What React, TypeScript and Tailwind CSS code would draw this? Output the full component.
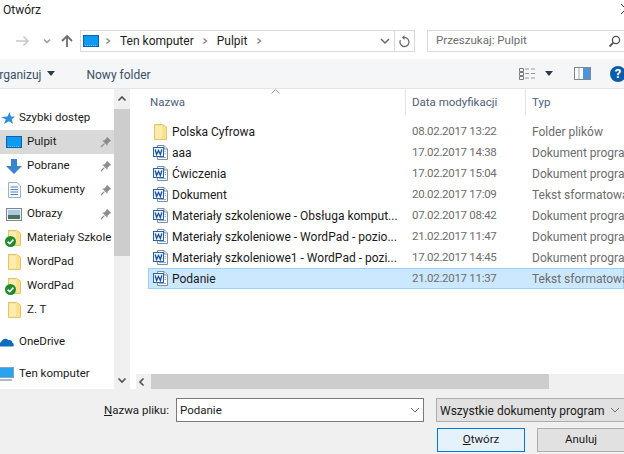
import React from "react";

const font = { fontFamily: 'Roboto, "Noto Sans", sans-serif' };

function WordIcon() {
  return (
    <svg width="16" height="16" viewBox="0 0 16 16" className="shrink-0">
      <path d="M4.5 0.5H11L14.5 4V14.5H4.5Z" fill="#fff" stroke="#7f8fa6" />
      <path d="M11 .5V4H14.5" fill="#e8eef5" stroke="#7f8fa6" />
      <rect x="0.5" y="2.5" width="10" height="9" fill="#e9f1fb" stroke="#2b62a8" />
      <path d="M2.2 4.5L3.6 9.5L5.5 5.5L7.4 9.5L8.8 4.5" fill="none" stroke="#1f4f96" strokeWidth="1.3" />
      <path d="M11.5 6.5H13M11.5 8.5H13M6 12.5H13" stroke="#8fb0d6" />
    </svg>
  );
}

function FolderIcon() {
  return (
    <svg width="13" height="16" viewBox="0 0 13 16" className="shrink-0">
      <path d="M0.5 0.5H8.5L12.5 3V15.5H0.5Z" fill="#fde28e" stroke="#e3c46f" />
      <path d="M1.5 2H8V14.5H1.5Z" fill="#ffedb0" />
    </svg>
  );
}

function Check() {
  return (
    <svg width="11" height="11" viewBox="0 0 11 11" className="absolute bottom-[-1px] left-[-3px]">
      <circle cx="5.5" cy="5.5" r="5.5" fill="#1f8a2e" />
      <path d="M2.6 5.6L4.7 7.7L8.4 3.6" fill="none" stroke="#fff" strokeWidth="1.6" />
    </svg>
  );
}

function Pin() {
  return (
    <svg width="12" height="12" viewBox="0 0 12 12">
      <path d="M7 0.8L11.2 5L9.8 5.6L7.6 7.8L7.4 9.8L2.2 4.6L4.2 4.4L6.4 2.2Z" fill="#8c8c8c" />
      <path d="M4.4 7.6L1 11" stroke="#8c8c8c" strokeWidth="1.2" />
    </svg>
  );
}

function Monitor() {
  return (
    <svg width="16" height="12" viewBox="0 0 16 12" className="shrink-0">
      <rect x="0.5" y="0.5" width="15" height="11" fill="#0f9af2" stroke="#0a63ad" />
      <path d="M2 10.5H14" stroke="#6fc6ff" strokeDasharray="1 1" />
    </svg>
  );
}

function Chevron({ className, d, color = "#606060", w = 1.5 }: { className?: string; d: string; color?: string; w?: number }) {
  return (
    <svg width="10" height="10" viewBox="0 0 10 10" className={`shrink-0 ${className ?? ""}`}>
      <path d={d} fill="none" stroke={color} strokeWidth={w} />
    </svg>
  );
}

function NavRow({
  icon,
  label,
  pin,
  active,
  spaced,
  top,
}: {
  icon: React.ReactNode;
  label: string;
  pin?: boolean;
  active?: boolean;
  spaced?: boolean;
  top?: boolean;
}) {
  return (
    <div
      className={`flex h-[24px] shrink-0 items-center overflow-hidden whitespace-nowrap ${active ? "bg-[#d9d9d9]" : ""} ${spaced ? "mt-[8px]" : ""}`}
    >
      <div className={`flex shrink-0 items-center ${top ? "w-[19px]" : "w-[27px] pl-[5px]"}`}>{icon}</div>
      <span className="flex-1 text-[#1a1a1a]">{label}</span>
      {pin && (
        <span className="mr-[2px] flex">
          <Pin />
        </span>
      )}
    </div>
  );
}

function CheckedFolder() {
  return (
    <span className="relative flex">
      <FolderIcon />
      <Check />
    </span>
  );
}

const files: [string, string, string, "folder" | "word"][] = [
  ["Polska Cyfrowa", "08.02.2017 13:22", "Folder plików", "folder"],
  ["aaa", "17.02.2017 14:38", "Dokument progra", "word"],
  ["Ćwiczenia", "17.02.2017 15:04", "Dokument progra", "word"],
  ["Dokument", "20.02.2017 17:09", "Tekst sformatowa", "word"],
  ["Materiały szkoleniowe - Obsługa komput...", "07.02.2017 08:42", "Dokument progra", "word"],
  ["Materiały szkoleniowe - WordPad - pozio...", "21.02.2017 11:47", "Dokument progra", "word"],
  ["Materiały szkoleniowe1 - WordPad - pozi...", "17.02.2017 14:45", "Dokument progra", "word"],
  ["Podanie", "21.02.2017 11:37", "Tekst sformatowa", "word"],
];

const crumb = "M3.5 2.5L6.5 5L3.5 7.5";

export default function App() {
  return (
    <div className="flex h-[454px] w-[624px] flex-col overflow-hidden bg-white text-[11.5px] leading-none" style={font}>
      {/* Title bar */}
      <div className="flex h-[30px] shrink-0 items-start justify-between pl-[3px] pt-[3px] text-[#222]">
        <span className="text-[12px] leading-[14px]">Otwórz</span>
        <svg width="12" height="12" viewBox="0 0 12 12" className="mr-[-8px] shrink-0">
          <path d="M1 1L11 11M11 1L1 11" fill="none" stroke="#333" />
        </svg>
      </div>

      {/* Address row */}
      <div className="flex h-[22px] shrink-0 items-center">
        <svg width="14" height="12" viewBox="0 0 14 12" className="ml-[16px] shrink-0">
          <path d="M0 6H12M7.5 1.5L12 6L7.5 10.5" fill="none" stroke="#c9c9c9" strokeWidth="1.6" />
        </svg>
        <Chevron className="ml-[12px]" d="M2 3.5L5 6.5L8 3.5" color="#9a9a9a" />
        <svg width="14" height="14" viewBox="0 0 14 14" className="ml-[8px] shrink-0">
          <path d="M7 13V2M2 7L7 2L12 7" fill="none" stroke="#6d6d6d" strokeWidth="1.8" />
        </svg>
        <div className="ml-[6px] flex h-[22px] w-[315px] shrink-0 items-center border border-[#d9d9d9] pl-[2px] text-[12px] text-[#222]">
          <Monitor />
          <Chevron className="ml-[4px]" d={crumb} color="#8c8c8c" />
          <span className="ml-[7px]">Ten komputer</span>
          <Chevron className="ml-[6px]" d={crumb} color="#8c8c8c" />
          <span className="ml-[7px]">Pulpit</span>
          <Chevron className="ml-[7px]" d={crumb} color="#8c8c8c" />
          <Chevron className="ml-auto mr-[4px]" d="M1 3L5 7L9 3" color="#6a6a6a" />
        </div>
        <div className="flex h-[22px] w-[20px] shrink-0 items-center justify-center border border-l-0 border-[#d9d9d9]">
          <svg width="13" height="13" viewBox="0 0 13 13">
            <path d="M6.5 2.5A4.5 4.5 0 1 1 2.4 5" fill="none" stroke="#6a6a6a" strokeWidth="1.3" />
            <path d="M6.5 0L3.8 2.6L6.5 5Z" fill="#6a6a6a" />
          </svg>
        </div>
        <div className="ml-[12px] flex h-[22px] flex-1 items-center justify-between border border-r-0 border-[#d9d9d9] pl-[8px] pr-[3px] text-[#6d6d6d]">
          <span>Przeszukaj: Pulpit</span>
          <svg width="13" height="13" viewBox="0 0 13 13">
            <circle cx="8" cy="5" r="3.6" fill="none" stroke="#555" strokeWidth="1.3" />
            <path d="M5.3 7.7L1.5 11.5" stroke="#555" strokeWidth="1.8" />
          </svg>
        </div>
      </div>

      {/* Command bar */}
      <div className="mt-[7px] flex h-[30px] shrink-0 items-center border-b border-[#e5e5e5] bg-[#f5f6f7] text-[12px] text-[#3b5066]">
        <span className="ml-[-9px] pt-[2px]">Organizuj</span>
        <span className="ml-[6px] h-0 w-0 border-x-[4px] border-t-[5px] border-x-transparent border-t-[#2b3b4b]" />
        <span className="ml-[31px] pt-[2px]">Nowy folder</span>
        <svg width="17" height="13" viewBox="0 0 17 13" className="ml-auto shrink-0">
          <path d="M.5 1.5h4v3h-4zM.5 5.5h4v3h-4zM.5 9.5h4v3h-4z" fill="none" stroke="#7a7a7a" />
          <path d="M6 2h4M12 2h4M6 6.5h4M12 6.5h4M6 11h4M12 11h4" stroke="#9a9a9a" />
        </svg>
        <span className="ml-[9px] h-0 w-0 border-x-[4px] border-t-[5px] border-x-transparent border-t-[#2b3b4b]" />
        <svg width="17" height="13" viewBox="0 0 17 13" className="ml-[21px] shrink-0">
          <rect x="0.5" y="0.5" width="16" height="12" fill="#fff" stroke="#7c8894" />
          <rect x="9" y="1" width="7" height="11" fill="#4d93d9" />
          <path d="M5 1V12" stroke="#9aa5b0" />
        </svg>
        <span className="ml-[19px] mr-[-2px] flex h-[16px] w-[16px] shrink-0 items-center justify-center rounded-full bg-[#0b5cab] text-[13px] font-bold text-white">
          ?
        </span>
      </div>

      {/* Navigation pane and file list */}
      <div className="flex h-[300px] shrink-0">
        <div className="flex w-[114px] shrink-0 flex-col overflow-hidden pt-[17px]">
          <NavRow
            top
            label="Szybki dostęp"
            icon={
              <svg width="14" height="13" viewBox="0 0 14 13" className="ml-[1px]">
                <path d="M8.5 0L10 4.5H14L10.8 7.2L12 12L8 9.2L3 12L4.8 7.4L0 5L6.5 4.5Z" fill="#2f8fd8" />
              </svg>
            }
          />
          <NavRow active pin label="Pulpit" icon={<span className="ml-[1px] flex"><Monitor /></span>} />
          <NavRow
            pin
            label="Pobrane"
            icon={
              <svg width="16" height="15" viewBox="0 0 16 15" className="ml-[1px]">
                <path d="M5 0H11V7H16L8 15L0 7H5Z" fill="#3a84cf" />
              </svg>
            }
          />
          <NavRow
            pin
            label="Dokumenty"
            icon={
              <svg width="13" height="16" viewBox="0 0 13 16" className="ml-[3px]">
                <path d="M.5.5H9L12.5 4V15.5H.5Z" fill="#f7fafd" stroke="#9fb0c0" />
                <path d="M2.5 5H10M2.5 7.5H10M2.5 10H10M2.5 12.5H10" stroke="#4d86bd" />
              </svg>
            }
          />
          <NavRow
            pin
            label="Obrazy"
            icon={
              <svg width="16" height="13" viewBox="0 0 16 13" className="ml-[1px]">
                <rect x="0.5" y="0.5" width="15" height="12" fill="#eef2f5" stroke="#7b8894" />
                <rect x="2" y="2" width="12" height="5" fill="#a9c9e4" />
                <rect x="2" y="7" width="12" height="4" fill="#49715c" />
              </svg>
            }
          />
          <NavRow label="Materiały Szkole" icon={<span className="ml-[3px] flex"><CheckedFolder /></span>} />
          <NavRow label="WordPad" icon={<span className="ml-[3px] flex"><FolderIcon /></span>} />
          <NavRow label="WordPad" icon={<span className="ml-[3px] flex"><CheckedFolder /></span>} />
          <NavRow label="Z. T" icon={<span className="ml-[3px] flex"><FolderIcon /></span>} />
          <NavRow
            top
            spaced
            label="OneDrive"
            icon={
              <svg width="15" height="10" viewBox="0 0 15 10" className="ml-[-1px]">
                <path d="M1 9.5C-.5 8 0 5.5 2 5.2C3 1.5 7.5 .5 9.5 3.2C12 2.6 13.5 4.5 13.3 5.8C15 6.2 15.3 8.8 14 9.5Z" fill="#0f6cbd" />
              </svg>
            }
          />
          <NavRow
            top
            spaced
            label="Ten komputer"
            icon={
              <svg width="16" height="14" viewBox="0 0 16 14" className="ml-[-2px]">
                <rect x="0.5" y="0.5" width="15" height="10" fill="#28a4ee" stroke="#7fa6c0" />
                <path d="M2 13H14" stroke="#8ba4b8" strokeWidth="1.5" />
              </svg>
            }
          />
        </div>

        {/* Navigation scrollbar */}
        <div className="flex w-[16px] shrink-0 flex-col items-center bg-[#f0f0f0]">
          <Chevron className="mt-[5px]" d="M1.5 6.5L5 3L8.5 6.5" color="#555" w={1.7} />
          <div className="mt-[5px] h-[147px] w-full bg-[#cdcdcd]" />
          <Chevron className="mb-[4px] mt-auto" d="M1.5 3.5L5 7L8.5 3.5" color="#555" w={1.7} />
        </div>

        {/* File list */}
        <div className="relative flex min-w-0 flex-1 flex-col overflow-hidden">
          <svg width="9" height="5" viewBox="0 0 9 5" className="absolute left-[141px] top-0">
            <path d="M.5 4.5L4.5 .5L8.5 4.5" fill="none" stroke="#9a9a9a" />
          </svg>
          <div className="ml-[20px] flex h-[26px] shrink-0 items-center text-[#4c607a]">
            <span className="w-[255px] pt-[2px]">Nazwa</span>
            <span className="flex h-full w-[120px] items-center border-l border-[#e5e5e5] pl-[6px] pt-[2px]">Data modyfikacji</span>
            <span className="flex h-full items-center border-l border-[#e5e5e5] pl-[6px] pt-[2px]">Typ</span>
          </div>
          <div className="ml-[18px] mt-[6px] flex flex-1 flex-col">
            {files.map(([name, date, type, kind]) => {
              const selected = name === "Podanie";
              return (
                <div
                  key={name}
                  className={`flex h-[21px] shrink-0 items-center whitespace-nowrap border text-[12px] ${selected ? "border-[#99d1ff] bg-[#cce8ff]" : "border-transparent"}`}
                >
                  <span className="ml-[4px] flex w-[15px] shrink-0 justify-center">{kind === "folder" ? <FolderIcon /> : <WordIcon />}</span>
                  <span className="ml-[4px] w-[240px] shrink-0 text-[#1a1a1a]">{name}</span>
                  <span className="w-[120px] shrink-0 text-[11.5px] tracking-[-0.3px] text-[#6d6d6d]">{date}</span>
                  <span className="text-[#6d6d6d]">{type}</span>
                </div>
              );
            })}
          </div>
          {/* Horizontal scrollbar */}
          <div className="ml-[6px] flex h-[15px] shrink-0 items-center bg-[#f0f0f0]">
            <Chevron className="ml-[1px]" d="M6.5 1.5L3 5L6.5 8.5" color="#555" w={1.7} />
            <div className="ml-[4px] h-full w-[398px] bg-[#cdcdcd]" />
          </div>
        </div>
      </div>

      {/* Dialog footer */}
      <div className="flex min-h-0 flex-1 flex-col bg-[#f0f0f0] pt-[9px] text-[#1a1a1a]">
        <div className="flex h-[24px] shrink-0 items-center">
          <span className="ml-[104px] w-[72px] pt-[2px]">
            <span className="underline">N</span>azwa pliku:
          </span>
          <div className="flex h-full w-[248px] shrink-0 items-center justify-between border border-[#7a7a7a] bg-white pl-[3px] pr-[3px]">
            <span className="pt-[2px]">Podanie</span>
            <Chevron d="M1 3L5 7L9 3" color="#707070" w={1} />
          </div>
          <div className="ml-[12px] flex h-full flex-1 items-center justify-between overflow-hidden whitespace-nowrap border border-r-0 border-[#adadad] bg-[#e1e1e1] pl-[3px] pr-[4px]">
            <span className="pt-[2px] text-[12px]">Wszystkie dokumenty program</span>
            <Chevron d="M1 3L5 7L9 3" color="#707070" w={1} />
          </div>
        </div>
        <div className="mt-[6px] flex h-[24px] shrink-0 justify-start">
          <button className="ml-[437px] flex h-full w-[88px] shrink-0 items-center justify-center border border-[#0078d7] bg-[#e5f1fb]">
            <span>
              <span className="underline">O</span>twórz
            </span>
          </button>
          <button className="ml-[12px] flex h-full flex-1 items-center justify-center border border-r-0 border-[#adadad] bg-[#e1e1e1]">
            Anuluj
          </button>
        </div>
      </div>
    </div>
  );
}
